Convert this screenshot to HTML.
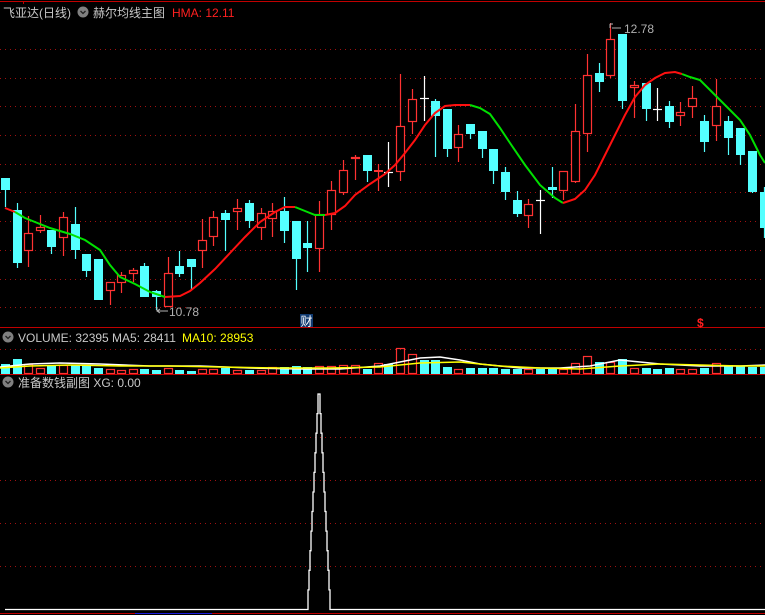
<!DOCTYPE html>
<html><head><meta charset="utf-8"><style>
html,body{margin:0;padding:0;background:#000;width:765px;height:615px;overflow:hidden}
svg{display:block}
text{font-family:"Liberation Sans","Noto Sans CJK SC",sans-serif}
</style></head><body>
<svg id="s" width="765" height="615" xmlns="http://www.w3.org/2000/svg">
<rect width="765" height="615" fill="#000"/>
<g id="g"></g>
<line x1="0" y1="1.5" x2="765" y2="1.5" stroke="#c00000"/>
<line x1="23.5" y1="1" x2="23.5" y2="4" stroke="#c00000"/>
<line x1="0" y1="327.5" x2="765" y2="327.5" stroke="#c00000"/>
<line x1="0" y1="374.5" x2="765" y2="374.5" stroke="#c00000"/>
<line x1="0" y1="613.5" x2="765" y2="613.5" stroke="#c00000"/>
<line x1="135" y1="613.5" x2="212" y2="613.5" stroke="#2020e0"/>
<text x="3" y="17" font-size="12" fill="#c8c8c8">飞亚达(日线)</text>
<circle cx="83" cy="12" r="5.5" fill="#808080"/><path d="M80.5 11 L83 13.5 L85.5 11" stroke="#222" stroke-width="1.3" fill="none"/>
<text x="93" y="17" font-size="12" fill="#c8c8c8">赫尔均线主图</text>
<text x="172" y="17" font-size="12" fill="#ff2020">HMA: 12.11</text>
<circle cx="8" cy="337" r="5.5" fill="#808080"/><path d="M5.5 336 L8 338.5 L10.5 336" stroke="#222" stroke-width="1.3" fill="none"/>
<text x="18" y="342" font-size="12" fill="#c8c8c8">VOLUME: 32395  MA5: 28411</text>
<text x="182" y="342" font-size="12" fill="#ffff00">MA10: 28953</text>
<circle cx="8" cy="382" r="5.5" fill="#808080"/><path d="M5.5 381 L8 383.5 L10.5 381" stroke="#222" stroke-width="1.3" fill="none"/>
<text x="18" y="387" font-size="12" fill="#c8c8c8">准备数钱副图 XG: 0.00</text>
<text x="169" y="316" font-size="12" fill="#b0b0b0">10.78</text>
<path d="M157 307 V311 H168 M157 311 l3 -2 M157 311 l3 2" stroke="#b0b0b0" fill="none"/>
<text x="624" y="33" font-size="12" fill="#b0b0b0">12.78</text>
<path d="M610 24 V28 M610 24 H613 M612 28 H621" stroke="#b0b0b0" fill="none"/>
<rect x="300" y="314" width="13" height="13" fill="#103a70"/>
<text x="300.5" y="325.5" font-size="12" fill="#fff">财</text>
<text x="697" y="327" font-size="12" font-weight="bold" fill="#ff2020">$</text>
</svg>
<script>
var g=document.getElementById('g'),h='';
function dot(y,x0,x1){h+='<line x1="'+x0+'" y1="'+y+'" x2="'+x1+'" y2="'+y+'" stroke="#a01010" stroke-dasharray="1,4"/>';}
[49,78,106,135,164,192,221,250,279,307].forEach(function(y){dot(y+.5,0,765)});
dot(349.5,0,765);[437,480,523,566].forEach(function(y){dot(y+.5,0,765)});
var C=[[5,178,190,178,207,'c'],[17,210,263,203,268,'c'],[28,233,251,216,267,'r'],[40,227,231,215,233,'r'],[51,230,247,230,254,'c'],[63,217,238,212,256,'r'],[75,224,250,207,259,'c'],[86,254,271,254,277,'c'],[98,259,300,259,300,'c'],[110,282,291,282,305,'r'],[121,275,283,272,293,'r'],[133,270,274,268,282,'r'],[144,266,297,263,297,'c'],[156,291,297,290,310,'c'],[168,273,307,257,307,'r'],[179,266,274,251,277,'c'],[191,259,267,259,289,'c'],
[202,240,251,219,268,'r'],[213,217,237,211,246,'r'],[225,213,220,210,251,'c'],[237,208,212,199,230,'r'],[249,203,221,200,228,'c'],[261,213,228,208,240,'r'],[272,211,219,203,237,'r'],[284,211,231,197,243,'c'],[296,221,259,221,290,'c'],[307,243,248,221,272,'c'],[319,214,249,201,272,'r'],[331,190,215,181,230,'r'],[343,170,193,160,195,'r'],[355,157,159,155,180,'r'],[367,155,171,155,182,'c'],[378,170,171,164,191,'r'],[388,172,172,142,187,'w'],
[400,126,172,74,181,'r'],[412,99,122,89,134,'r'],[424,98,98,76,121,'w'],[435,101,116,99,157,'c'],[447,109,149,109,157,'c'],[458,134,148,125,162,'r'],[470,124,134,124,139,'c'],[482,131,149,131,158,'c'],[493,149,171,149,184,'c'],[505,172,192,167,200,'c'],[517,200,214,191,217,'c'],[528,204,216,199,228,'r'],[540,200,200,190,234,'w'],[552,187,190,167,198,'c'],[563,171,191,171,200,'r'],[575,131,182,104,183,'r'],[587,75,134,54,152,'r'],[599,73,82,63,92,'c'],[610,39,76,23,78,'r'],[622,34,101,34,109,'c'],[634,85,88,81,118,'r'],[646,83,109,83,121,'c'],[657,109,109,88,121,'w'],[669,106,122,101,128,'c'],[680,112,116,102,126,'r'],[692,98,107,86,118,'r'],[704,121,142,115,152,'c'],[716,106,126,79,141,'r'],[728,121,138,116,155,'c'],[740,128,155,128,165,'c'],[752,151,192,151,193,'c'],[764,192,228,187,238,'c']];
var col={c:'#54ffff',r:'#ff3232',w:'#ffffff'};
C.forEach(function(k){var x=k[0],cl=col[k[5]];
 h+='<line x1="'+(x+.5)+'" y1="'+k[3]+'" x2="'+(x+.5)+'" y2="'+k[4]+'" stroke="'+cl+'" stroke-width="1.2"/>';
 if(k[5]=='c')h+='<rect x="'+(x-4)+'" y="'+k[1]+'" width="9" height="'+Math.max(1,k[2]-k[1])+'" fill="'+cl+'"/>';
 else if(k[5]=='r'){if(k[2]-k[1]<2)h+='<rect x="'+(x-4)+'" y="'+k[1]+'" width="9" height="2" fill="'+cl+'"/>';else h+='<rect x="'+(x-3.5)+'" y="'+(k[1]+.5)+'" width="8" height="'+(k[2]-k[1]-1)+'" fill="#000" stroke="'+cl+'" stroke-width="1.2"/>';}
 else h+='<line x1="'+(x-4)+'" y1="'+(k[1]+.5)+'" x2="'+(x+5)+'" y2="'+(k[1]+.5)+'" stroke="#fff" stroke-width="1.2"/>';
});
function pl(p,c){h+='<polyline points="'+p+'" fill="none" stroke="'+c+'" stroke-width="2"/>';}
pl('5,208 15,212','#ff1010');
pl('15,212 25,218 35,222 50,228 70,234 85,240 100,250 110,265 120,277 135,284 150,292 165,297','#00e000');
pl('165,297 180,296 190,291 200,283 215,269 230,253 245,237 260,222 275,212 285,207 295,207','#ff1010');
pl('295,207 305,211 315,215 325,215','#00e000');
pl('325,215 335,213 345,206 355,195 370,184 385,174 395,165 405,153 415,140 425,125 435,113 445,106 455,105 470,105','#ff1010');
pl('470,105 480,108 490,114 500,128 510,143 525,165 540,185 555,198 563,203','#00e000');
pl('563,203 575,199 585,190 595,175 605,155 615,135 625,115 635,97 645,85 655,78 665,73 675,72 682,74','#ff1010');
pl('682,74 690,77 700,80 710,90 720,100 730,110 740,120 750,135 760,155 765,163','#00e000');
var V=[364,359,364,368,366,365,365,365,368,369,370,369,369,370,368,370,371,369,369,368,370,370,370,367,367,366,367,366,366,365,365,369,363,364,348,354,360,360,367,369,368,368,368,369,369,369,369,369,369,363,356,362,362,359,368,368,369,368,369,369,368,363,365,366,367,367];
C.forEach(function(k,i){var x=k[0],y=V[i],cl=k[5];
 if(cl=='r')h+='<rect x="'+(x-3.5)+'" y="'+(y+.5)+'" width="8" height="'+(373-y)+'" fill="none" stroke="#ff3232" stroke-width="1.2"/>';
 else h+='<rect x="'+(x-4)+'" y="'+y+'" width="9" height="'+(374-y)+'" fill="#54ffff"/>';});
h+='<polyline points="0,367 30,364 60,363 100,364 150,366 200,366 250,368 300,369 340,369 380,366 400,362 420,358 440,357 460,360 480,364 520,368 560,368 590,366 620,360 640,362 660,364 700,366 740,366 765,365" fill="none" stroke="#fff" stroke-width="1.5"/>';
h+='<polyline points="0,368 30,366 70,365 120,366 170,366 220,367 280,368 330,368 380,367 420,363 460,362 500,366 540,368 580,369 620,366 660,364 700,365 740,366 765,366" fill="none" stroke="#ffff00" stroke-width="1.5"/>';
var s='5,609.5 307,609.5',pk=394,n=11,a0=308,a1=330,st=(609.5-pk)/n;
for(var i=0;i<n;i++){var y0=609.5-(i+1)*st;var xx=a0+i*(319-a0)/n;s+=' '+xx.toFixed(1)+','+(y0+st).toFixed(1)+' '+xx.toFixed(1)+','+y0.toFixed(1);}
for(var j=n-1;j>=0;j--){var y1=609.5-(j+1)*st;var x2=a1-j*(a1-319)/n;s+=' '+x2.toFixed(1)+','+y1.toFixed(1)+' '+x2.toFixed(1)+','+(y1+st).toFixed(1);}
s+=' 331,609.5 765,609.5';
h+='<polyline points="'+s+'" fill="none" stroke="#fff" stroke-width="1.3"/>';
g.innerHTML=h;
</script>
</body></html>
